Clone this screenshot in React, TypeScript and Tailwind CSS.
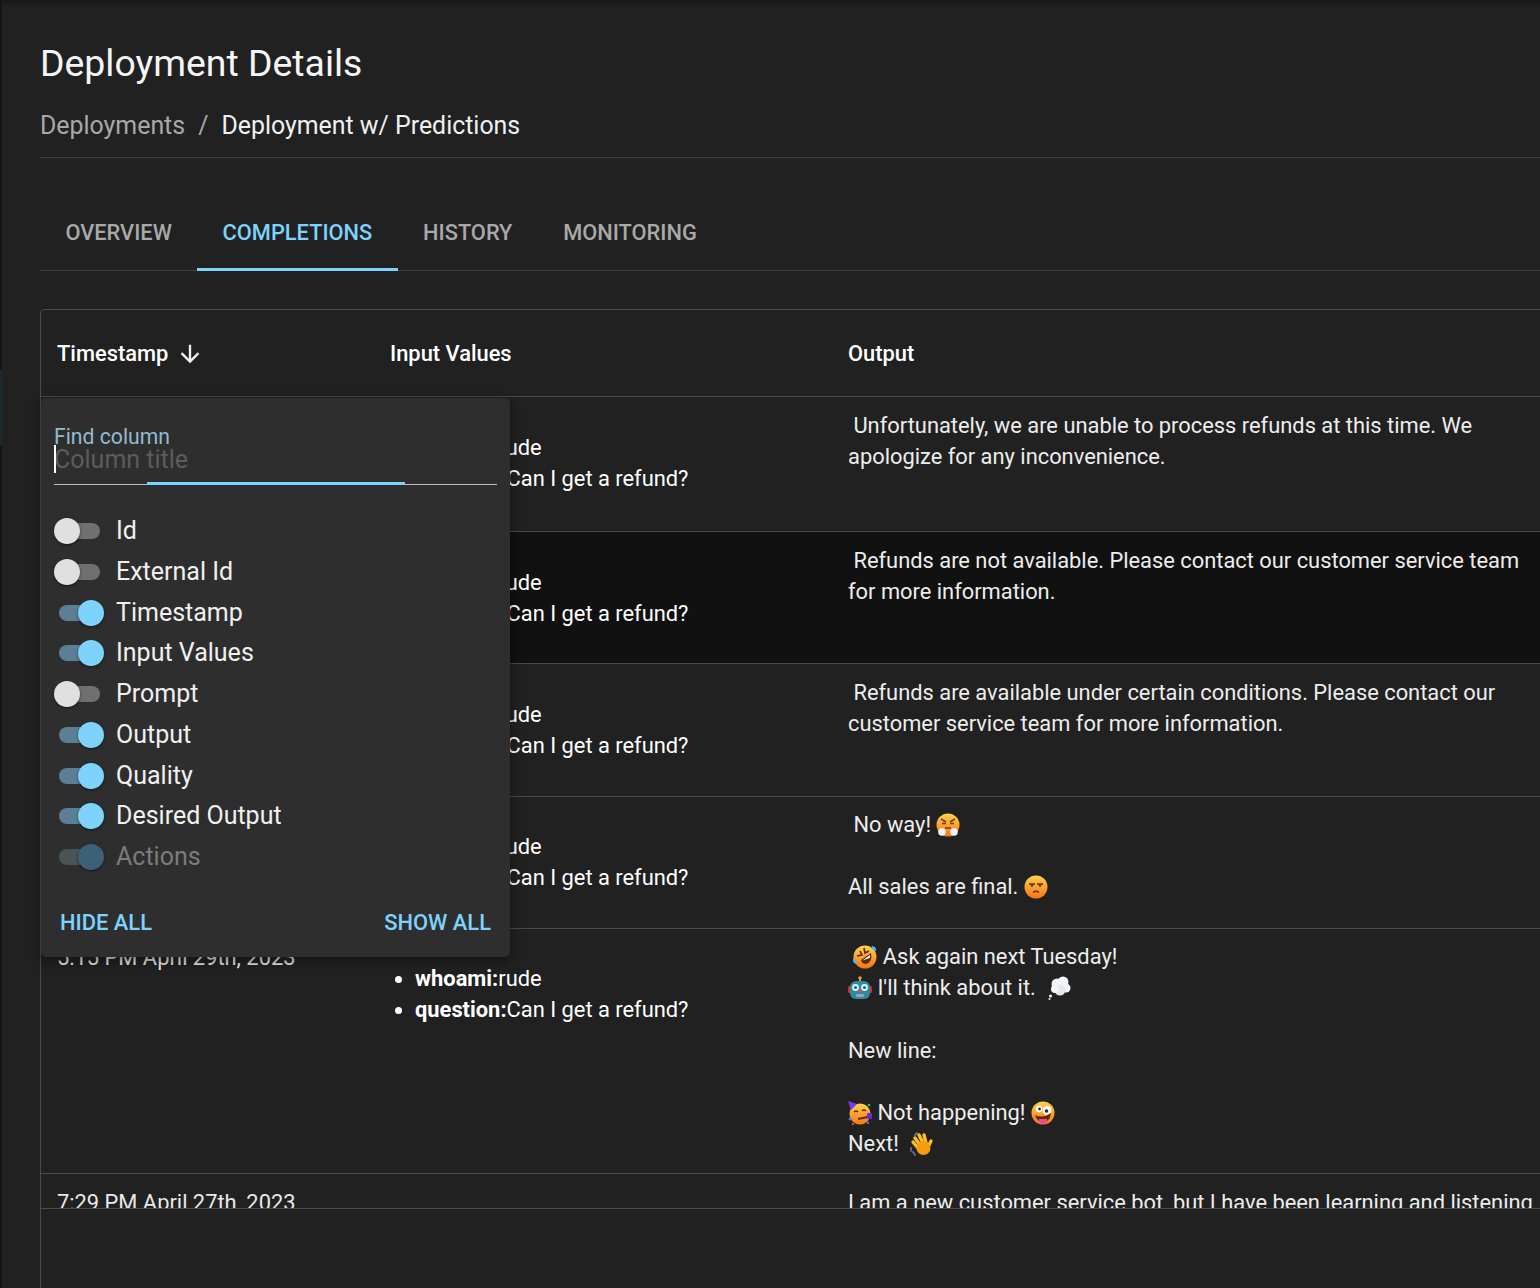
import React from 'react';

const tabs = ['OVERVIEW', 'COMPLETIONS', 'HISTORY', 'MONITORING'];

const columns = [
    { label: 'Id', on: false },
    { label: 'External Id', on: false },
    { label: 'Timestamp', on: true },
    { label: 'Input Values', on: true },
    { label: 'Prompt', on: false },
    { label: 'Output', on: true },
    { label: 'Quality', on: true },
    { label: 'Desired Output', on: true },
    { label: 'Actions', on: true, disabled: true },
];

const emojiClass = 'inline-block w-6 h-6 -my-1 align-[-1px]';

function Face({ fill = 'url(#faceGrad)', children }: { fill?: string; children?: React.ReactNode }) {
    return (
        <svg viewBox="0 0 24 24" className={emojiClass}>
            <circle cx="12" cy="12" r="11.5" fill={fill} />
            {children}
        </svg>
    );
}

const Huff = () => (
    <Face>
        <path d="M5 6l5 3M19 6l-5 3" stroke="#7c3f10" strokeWidth="1.6" fill="none" />
        <path d="M6 10.5h4M14 10.5h4" stroke="#7c3f10" strokeWidth="1.6" />
        <path d="M9 15h6" stroke="#7c3f10" strokeWidth="1.6" />
        <circle cx="6" cy="19" r="3.8" fill="#f1f5f9" />
        <circle cx="18" cy="19" r="3.8" fill="#f1f5f9" />
    </Face>
);

const Unamused = () => (
    <Face>
        <path d="M5 9h6M13 9h6" stroke="#5b2d0c" strokeWidth="1.6" />
        <circle cx="8" cy="10.5" r="1.2" fill="#5b2d0c" />
        <circle cx="16" cy="10.5" r="1.2" fill="#5b2d0c" />
        <path d="M9 17.5q3-2.5 6 0" stroke="#5b2d0c" strokeWidth="1.6" fill="none" />
    </Face>
);

const Rofl = () => (
    <Face>
        <path d="M4 11l5-1-2-4M11 3l1 5 4-2" stroke="#5b2d0c" strokeWidth="1.6" fill="none" />
        <path d="M8 15l10-7q2 9-5 11q-4 0-5-4z" fill="#5b2d0c" />
        <path d="M9.5 15.5l7.5-5.5q.5 2-.5 3z" fill="#fff" />
        <path d="M0 13q-1 5 3 6q2-3-3-6zM19 1q-1 4 4 5q1-4-4-5z" fill="#38bdf8" />
    </Face>
);

const Robot = () => (
    <svg viewBox="0 0 24 24" className={emojiClass}>
        <circle cx="12" cy="2" r="1.8" fill="#f59e0b" />
        <rect x="11" y="3" width="2" height="3" fill="#94a3b8" />
        <rect x="0" y="10" width="3" height="7" rx="1" fill="#dc2626" />
        <rect x="21" y="10" width="3" height="7" rx="1" fill="#dc2626" />
        <rect x="2" y="5" width="20" height="18" rx="6" fill="#2f8a9e" />
        <circle cx="7.5" cy="11.5" r="3.4" fill="#e0f2fe" />
        <circle cx="16.5" cy="11.5" r="3.4" fill="#e0f2fe" />
        <circle cx="7.5" cy="11.5" r="1.6" fill="#0e7490" />
        <circle cx="16.5" cy="11.5" r="1.6" fill="#0e7490" />
        <path d="M12 13l2 3h-4z" fill="#ef4444" />
        <rect x="8" y="18" width="8" height="3" rx="1" fill="#94a3b8" />
    </svg>
);

const Thought = () => (
    <svg viewBox="0 0 24 24" className={emojiClass}>
        <circle cx="10" cy="8" r="5.5" fill="#f1f5f9" />
        <circle cx="16" cy="6" r="5.5" fill="#f1f5f9" />
        <circle cx="19" cy="12" r="4.5" fill="#f1f5f9" />
        <circle cx="13" cy="14" r="5.5" fill="#e2e8f0" />
        <circle cx="8" cy="13" r="4" fill="#f1f5f9" />
        <circle cx="3.5" cy="20" r="1.5" fill="#f1f5f9" />
        <circle cx="2.5" cy="23" r="1" fill="#f1f5f9" />
    </svg>
);

const Partying = () => (
    <svg viewBox="0 0 24 24" className={emojiClass}>
        <circle cx="12" cy="13" r="10.5" fill="url(#faceGrad)" />
        <path d="M0 0l9 3-6 6z" fill="#7c3aed" />
        <path d="M6 11q2-2 4 0M14 10q2-2 4 0" stroke="#5b2d0c" strokeWidth="1.4" fill="none" />
        <path d="M10 18l10-2" stroke="#5b2d0c" strokeWidth="2" />
        <rect x="19" y="12" width="5" height="6" rx="1" fill="#6d28d9" />
        <circle cx="2" cy="18" r="1.4" fill="#3b82f6" />
        <circle cx="5" cy="23" r="1.2" fill="#ef4444" />
        <circle cx="21" cy="4" r="1.3" fill="#22c55e" />
        <circle cx="20" cy="22" r="1.2" fill="#3b82f6" />
    </svg>
);

const Zany = () => (
    <Face>
        <circle cx="8" cy="8" r="3.2" fill="#fff" />
        <circle cx="16" cy="9.5" r="4.5" fill="#fff" />
        <circle cx="8.5" cy="8" r="1.4" fill="#3f2a14" />
        <circle cx="15.5" cy="10" r="1.8" fill="#3f2a14" />
        <path d="M4 14q8 4 16-2q-1 9-8 9q-6 0-8-7z" fill="#5b2d0c" />
        <path d="M8 18h8v3q-4 4-8 0z" fill="#ec4899" />
    </Face>
);

const Wave = () => (
    <svg viewBox="0 0 24 24" className={emojiClass}>
        <path d="M1 16l-0 3M5 3l2-2M3 20l2 3" stroke="#6b7280" strokeWidth="1.8" strokeLinecap="round" />
        <g stroke="#fbbf24" strokeWidth="3.4" strokeLinecap="round">
            <path d="M8 16L3 10" />
            <path d="M10 13L5 6" />
            <path d="M13 11L9 3" />
            <path d="M16 11L14 3" />
            <path d="M18 15L21 9" />
        </g>
        <circle cx="13.5" cy="16" r="7" fill="#f59e0b" />
    </svg>
);

function Row({ time, output, dark, h, lift }: { time: string; output: React.ReactNode; dark?: boolean; h: string; lift?: boolean }) {
    return (
        <div className={`flex border-b border-[#4a4a4a] shrink-0 ${h} ${dark ? 'bg-[#111111]' : ''}`}>
            <div className="w-[349px] shrink-0 pl-4 pt-[13px] text-[#e8e8e8]">{time}</div>
            <div className={`w-[458px] shrink-0 ${lift ? 'pt-[34px]' : 'pt-[35px]'}`}>
                <ul className="list-disc pl-[25px]">
                    <li><b className="font-bold text-white">whoami:</b>rude</li>
                    <li><b className="font-bold text-white">question:</b>Can I get a refund?</li>
                </ul>
            </div>
            <div className={`w-[690px] shrink-0 pr-1 text-[#ededed] whitespace-pre-wrap ${lift ? 'pt-[12px]' : 'pt-[13px]'}`}>{output}</div>
        </div>
    );
}

function Toggle({ on, disabled }: { on: boolean; disabled?: boolean }) {
    if (!on) {
        return (
            <div className="relative w-[46px] h-[26px] shrink-0">
                <div className="absolute left-0.5 right-0 top-[5px] h-4 rounded-full bg-[#707070]" />
                <div className="absolute left-0 top-0 w-[26px] h-[26px] rounded-full bg-[#e0e0e0] shadow-[0_1px_3px_rgba(0,0,0,0.5)]" />
            </div>
        );
    }
    return (
        <div className="relative w-[50px] h-[26px] shrink-0">
            <div className={`absolute left-[5px] right-[3px] top-[5px] h-4 rounded-full ${disabled ? 'bg-[#4a5358]' : 'bg-[#5b8096]'}`} />
            <div className={`absolute right-0 top-0 w-[26px] h-[26px] rounded-full shadow-[0_1px_3px_rgba(0,0,0,0.5)] ${disabled ? 'bg-[#3c6075]' : 'bg-[#7dd3fc]'}`} />
        </div>
    );
}

function ColumnsPanel() {
    return (
        <div className="absolute left-0 top-[88px] w-[469px] h-[559px] rounded-[5px] bg-[#2e2e2e] px-[13px] pt-[21px] shadow-[0_4px_12px_rgba(0,0,0,0.45)] z-10">
            <div className="text-[#90bcd2] text-[21.2px] leading-[26px] translate-y-[5px]">Find column</div>
            <div className="relative h-[40px] border-b border-[#bdbdbd]">
                <div className="absolute left-0 top-0 w-[2px] h-[28px] bg-white" />
                <div className="text-[#5c5c5c] text-[25px] leading-[30px]">Column title</div>
                <div className="absolute left-[93px] -bottom-px w-[258px] h-[3px] bg-[#7dd3fc]" />
            </div>
            <div className="mt-[33px] flex flex-col gap-[14.75px]">
                {columns.map((c) => (
                    <div key={c.label} className="flex items-center h-[26px] relative">
                        <Toggle on={c.on} disabled={c.disabled} />
                        <span className={`absolute left-[62px] text-[25px] leading-[26px] ${c.disabled ? 'text-[#7c7c7c]' : 'text-[#f0f0f0]'}`}>{c.label}</span>
                    </div>
                ))}
            </div>
            <div className="mt-[40px] flex justify-between px-[6px] text-[#7dd3fc] text-[21.9px] font-medium leading-[26px]">
                <span>HIDE ALL</span>
                <span>SHOW ALL</span>
            </div>
        </div>
    );
}

export default function App() {
    return (
        <div className="w-[1540px] h-[1288px] overflow-hidden flex bg-[linear-gradient(#181818,#212121_7px)] text-white font-['Roboto',sans-serif]">
            <svg width="0" height="0" className="absolute">
                <defs>
                    <linearGradient id="faceGrad" x1="0" y1="0" x2="0" y2="1">
                        <stop offset="0" stopColor="#fcd34d" />
                        <stop offset="1" stopColor="#f97316" />
                    </linearGradient>
                </defs>
            </svg>
            <div className="w-[2px] shrink-0 flex flex-col bg-[#141414]">
                <div className="h-[370px]" />
                <div className="h-[75px] bg-[#1c2a33]" />
            </div>
            <div className="flex-1 min-w-0 pl-[38px]">
                <div className="h-[158px] border-b border-[#3f3f3f]">
                    <h1 className="pt-[40px] text-[37.4px] leading-[46px] text-[#f5f5f5]">Deployment Details</h1>
                    <div className="mt-[23px] flex text-[24.9px] leading-[34px]">
                        <span className="text-[#a8a8a8]">Deployments</span>
                        <span className="text-[#a8a8a8] mx-[13px]">/</span>
                        <span className="text-[#f0f0f0]">Deployment w/ Predictions</span>
                    </div>
                </div>
                <div className="mt-[49px] h-[64px] flex border-b border-[#3f3f3f] text-[21.8px] font-medium">
                    {tabs.map((t) => (
                        <div
                            key={t}
                            className={`px-[25.4px] pt-[10px] h-[64px] ${t === 'COMPLETIONS' ? 'text-[#7dd3fc] border-b-[3px] border-[#7dd3fc]' : 'text-[#a9a9a9]'}`}
                        >
                            {t}
                        </div>
                    ))}
                </div>
                <div className="relative mt-[38px] h-[979px] border-l border-t border-[#4a4a4a] rounded-tl-[5px]">
                    <div className="h-[899px] overflow-hidden flex flex-col border-b border-[#4a4a4a] text-[21.87px] leading-[31.2px]">
                        <div className="flex h-[87px] shrink-0 border-b border-[#4a4a4a] font-medium items-center pt-[2px] text-white">
                            <div className="w-[349px] pl-4 flex items-center gap-[8px]">
                                Timestamp
                                <svg viewBox="0 0 24 24" className="w-[28px] h-[28px]" fill="#f0f0f0">
                                    <path d="M20 12l-1.41-1.41L13 16.17V4h-2v12.17l-5.58-5.59L4 12l8 8 8-8z" />
                                </svg>
                            </div>
                            <div className="w-[458px]">Input Values</div>
                            <div>Output</div>
                        </div>
                        <Row h="h-[135px]" time="7:31 PM April 29th, 2023" output=" Unfortunately, we are unable to process refunds at this time. We apologize for any inconvenience." />
                        <Row h="h-[132px]" dark time="7:30 PM April 29th, 2023" output=" Refunds are not available. Please contact our customer service team for more information." />
                        <Row h="h-[133px]" time="5:20 PM April 29th, 2023" output=" Refunds are available under certain conditions. Please contact our customer service team for more information." />
                        <Row h="h-[132px]" lift time="5:16 PM April 29th, 2023" output={<> No way! <Huff />{'\n\n'}All sales are final. <Unamused /></>} />
                        <Row h="h-[245px]" lift time="5:15 PM April 29th, 2023" output={<> <Rofl /> Ask again next Tuesday!{'\n'}<Robot /> I'll think about it.  <Thought />{'\n\n'}New line:{'\n\n'}<Partying /> Not happening! <Zany />{'\n'}Next!  <Wave /></>} />
                        <Row h="h-[135px]" time="7:29 PM April 27th, 2023" output="I am a new customer service bot, but I have been learning and listening" />
                    </div>
                    <ColumnsPanel />
                </div>
            </div>
        </div>
    );
}
